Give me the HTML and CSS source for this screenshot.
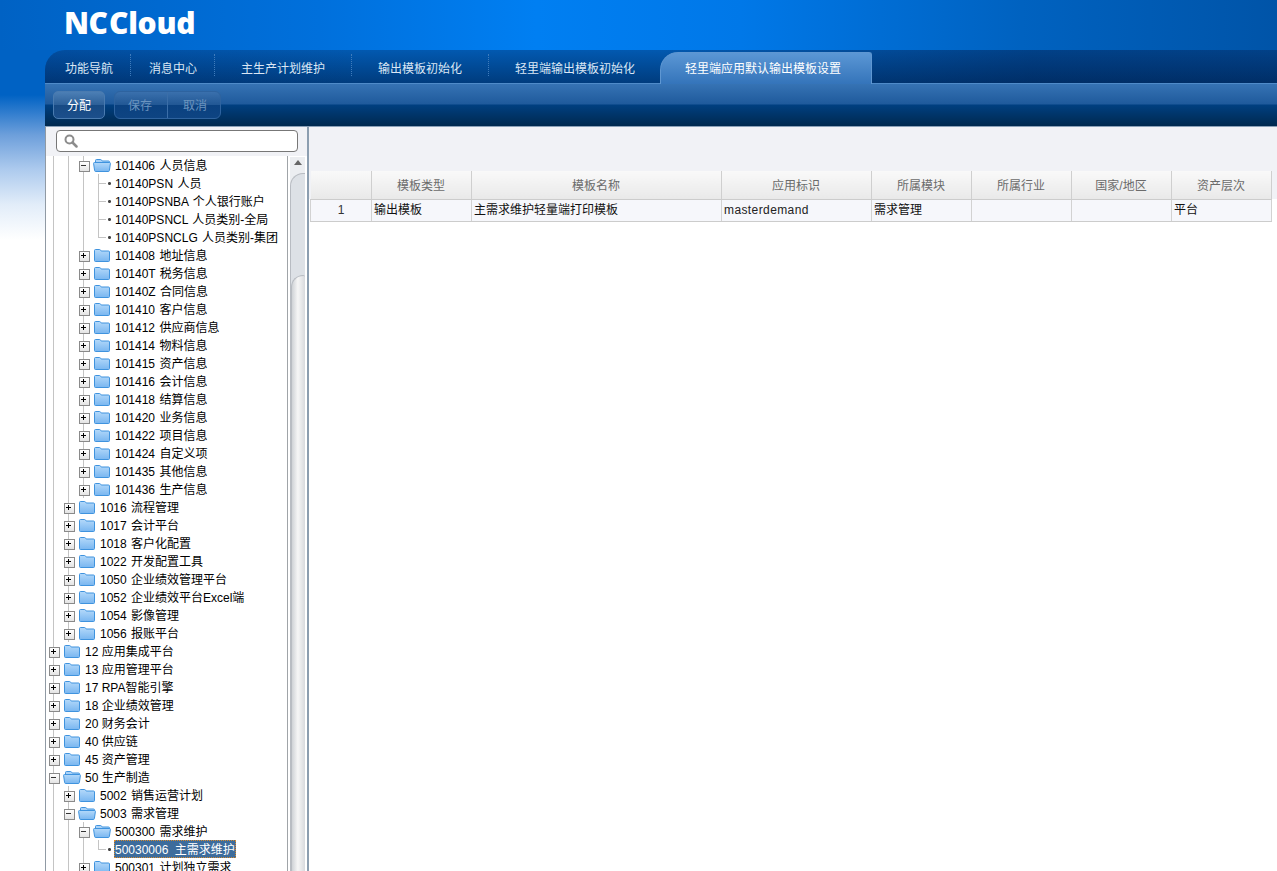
FILE: index.html
```html
<!DOCTYPE html>
<html lang="zh-CN">
<head>
<meta charset="utf-8">
<title>NC Cloud</title>
<link rel="stylesheet" href="styles.css">
</head>
<body>
<svg class="defs" width="0" height="0" aria-hidden="true">
  <defs>
    <linearGradient id="fb" x1="0" y1="0" x2="0" y2="1"><stop offset="0" stop-color="#b4d9fa"/><stop offset="1" stop-color="#79b6f0"/></linearGradient>
    <symbol id="fc" viewBox="0 0 16 13"><path d="M.5 3V1.500q0-1 1-1h4q.8 0 1.200.8l.5.7h7.300q1 0 1 1v8.500q0 1-1 1h-13q-1 0-1-1z" fill="url(#fb)" stroke="#3f93de"/></symbol>
    <symbol id="fo" viewBox="0 0 18 13"><path d="M2.500 4V1.500q0-1 1-1h4q.8 0 1.200.8l.5.7h6.300q1 0 1 1V4" fill="#a9d2f8" stroke="#3f93de"/><path d="M1.500 3.500h15q1 0 .9 1l-1 7q-.1 1-1.100 1H2.700q-1 0-1.100-1l-1-7q-.1-1 .9-1z" fill="url(#fb)" stroke="#3f93de"/></symbol>
  </defs>
</svg>
<header class="brand"><span class="logo"><span class="logo-nc">NC</span><span class="logo-cloud">Cloud</span></span></header>
<div class="shell">
  <nav class="tabs">
    <a class="tab t1">功能导航</a>
    <a class="tab t2">消息中心</a>
    <a class="tab t3">主生产计划维护</a>
    <a class="tab t3">输出模板初始化</a>
    <a class="tab t4">轻里端输出模板初始化</a>
    <a class="tab active">轻里端应用默认输出模板设置</a>
  </nav>
  <div class="toolbar">
    <button class="btn solo">分配</button>
    <div class="btn-group"><button class="btn off">保存</button><button class="btn off">取消</button></div>
  </div>
  <main class="content">
    <aside class="side">
      <div class="search">
        <div class="search-box">
          <svg class="search-icon" width="14" height="14" viewBox="0 0 14 14"><circle cx="5.500" cy="5.500" r="4" fill="none" stroke="#8c8c8c" stroke-width="2"/><path d="M8.500 8.500l4 4" stroke="#8c8c8c" stroke-width="2.500" stroke-linecap="round"/></svg>
        </div>
      </div>
      <div class="tree-wrap">
        <div class="tree">
          <div class="row"><i class="g"></i><i class="g"></i><i class="x m"></i><svg class="fo"><use href="#fo"/></svg><span class="lb">101406 人员信息</span></div>
          <div class="row"><i class="g"></i><i class="g"></i><i class="g"></i><i class="e"></i><i class="d"></i><span class="lb">10140PSN 人员</span></div>
          <div class="row"><i class="g"></i><i class="g"></i><i class="g"></i><i class="e"></i><i class="d"></i><span class="lb">10140PSNBA 个人银行账户</span></div>
          <div class="row"><i class="g"></i><i class="g"></i><i class="g"></i><i class="e"></i><i class="d"></i><span class="lb">10140PSNCL 人员类别-全局</span></div>
          <div class="row"><i class="g"></i><i class="g"></i><i class="g"></i><i class="e end"></i><i class="d"></i><span class="lb">10140PSNCLG 人员类别-集团</span></div>
          <div class="row"><i class="g"></i><i class="g"></i><i class="x"></i><svg class="fc"><use href="#fc"/></svg><span class="lb">101408 地址信息</span></div>
          <div class="row"><i class="g"></i><i class="g"></i><i class="x"></i><svg class="fc"><use href="#fc"/></svg><span class="lb">10140T 税务信息</span></div>
          <div class="row"><i class="g"></i><i class="g"></i><i class="x"></i><svg class="fc"><use href="#fc"/></svg><span class="lb">10140Z 合同信息</span></div>
          <div class="row"><i class="g"></i><i class="g"></i><i class="x"></i><svg class="fc"><use href="#fc"/></svg><span class="lb">101410 客户信息</span></div>
          <div class="row"><i class="g"></i><i class="g"></i><i class="x"></i><svg class="fc"><use href="#fc"/></svg><span class="lb">101412 供应商信息</span></div>
          <div class="row"><i class="g"></i><i class="g"></i><i class="x"></i><svg class="fc"><use href="#fc"/></svg><span class="lb">101414 物料信息</span></div>
          <div class="row"><i class="g"></i><i class="g"></i><i class="x"></i><svg class="fc"><use href="#fc"/></svg><span class="lb">101415 资产信息</span></div>
          <div class="row"><i class="g"></i><i class="g"></i><i class="x"></i><svg class="fc"><use href="#fc"/></svg><span class="lb">101416 会计信息</span></div>
          <div class="row"><i class="g"></i><i class="g"></i><i class="x"></i><svg class="fc"><use href="#fc"/></svg><span class="lb">101418 结算信息</span></div>
          <div class="row"><i class="g"></i><i class="g"></i><i class="x"></i><svg class="fc"><use href="#fc"/></svg><span class="lb">101420 业务信息</span></div>
          <div class="row"><i class="g"></i><i class="g"></i><i class="x"></i><svg class="fc"><use href="#fc"/></svg><span class="lb">101422 项目信息</span></div>
          <div class="row"><i class="g"></i><i class="g"></i><i class="x"></i><svg class="fc"><use href="#fc"/></svg><span class="lb">101424 自定义项</span></div>
          <div class="row"><i class="g"></i><i class="g"></i><i class="x"></i><svg class="fc"><use href="#fc"/></svg><span class="lb">101435 其他信息</span></div>
          <div class="row"><i class="g"></i><i class="g"></i><i class="x"></i><svg class="fc"><use href="#fc"/></svg><span class="lb">101436 生产信息</span></div>
          <div class="row"><i class="g"></i><i class="x"></i><svg class="fc"><use href="#fc"/></svg><span class="lb">1016 流程管理</span></div>
          <div class="row"><i class="g"></i><i class="x"></i><svg class="fc"><use href="#fc"/></svg><span class="lb">1017 会计平台</span></div>
          <div class="row"><i class="g"></i><i class="x"></i><svg class="fc"><use href="#fc"/></svg><span class="lb">1018 客户化配置</span></div>
          <div class="row"><i class="g"></i><i class="x"></i><svg class="fc"><use href="#fc"/></svg><span class="lb">1022 开发配置工具</span></div>
          <div class="row"><i class="g"></i><i class="x"></i><svg class="fc"><use href="#fc"/></svg><span class="lb">1050 企业绩效管理平台</span></div>
          <div class="row"><i class="g"></i><i class="x"></i><svg class="fc"><use href="#fc"/></svg><span class="lb">1052 企业绩效平台Excel端</span></div>
          <div class="row"><i class="g"></i><i class="x"></i><svg class="fc"><use href="#fc"/></svg><span class="lb">1054 影像管理</span></div>
          <div class="row"><i class="g"></i><i class="x"></i><svg class="fc"><use href="#fc"/></svg><span class="lb">1056 报账平台</span></div>
          <div class="row"><i class="x"></i><svg class="fc"><use href="#fc"/></svg><span class="lb">12 应用集成平台</span></div>
          <div class="row"><i class="x"></i><svg class="fc"><use href="#fc"/></svg><span class="lb">13 应用管理平台</span></div>
          <div class="row"><i class="x"></i><svg class="fc"><use href="#fc"/></svg><span class="lb">17 RPA智能引擎</span></div>
          <div class="row"><i class="x"></i><svg class="fc"><use href="#fc"/></svg><span class="lb">18 企业绩效管理</span></div>
          <div class="row"><i class="x"></i><svg class="fc"><use href="#fc"/></svg><span class="lb">20 财务会计</span></div>
          <div class="row"><i class="x"></i><svg class="fc"><use href="#fc"/></svg><span class="lb">40 供应链</span></div>
          <div class="row"><i class="x"></i><svg class="fc"><use href="#fc"/></svg><span class="lb">45 资产管理</span></div>
          <div class="row"><i class="x m"></i><svg class="fo"><use href="#fo"/></svg><span class="lb">50 生产制造</span></div>
          <div class="row"><i class="g"></i><i class="x"></i><svg class="fc"><use href="#fc"/></svg><span class="lb">5002 销售运营计划</span></div>
          <div class="row"><i class="g"></i><i class="x m"></i><svg class="fo"><use href="#fo"/></svg><span class="lb">5003 需求管理</span></div>
          <div class="row"><i class="g"></i><i class="g"></i><i class="x m"></i><svg class="fo"><use href="#fo"/></svg><span class="lb">500300 需求维护</span></div>
          <div class="row"><i class="g"></i><i class="g"></i><i class="g"></i><i class="e end"></i><i class="d"></i><span class="lb sel">50030006 主需求维护</span></div>
          <div class="row"><i class="g"></i><i class="g"></i><i class="x"></i><svg class="fc"><use href="#fc"/></svg><span class="lb">500301 计划独立需求</span></div>
        </div>
        <div class="scrollbar">
          <div class="sb-up"><i class="sb-arrow"></i></div>
          <div class="sb-track"><div class="sb-thumb"></div></div>
        </div>
      </div>
    </aside>
    <section class="panel">
      <div class="panel-top"></div>
      <div class="grid">
        <table class="tbl">
          <colgroup><col class="c0"><col class="c1"><col class="c2"><col class="c3"><col class="c1"><col class="c1"><col class="c1"><col class="c1"></colgroup>
          <thead>
            <tr><th></th><th>模板类型</th><th>模板名称</th><th>应用标识</th><th>所属模块</th><th>所属行业</th><th>国家/地区</th><th>资产层次</th></tr>
          </thead>
          <tbody>
            <tr><td class="num">1</td><td>输出模板</td><td>主需求维护轻量端打印模板</td><td class="latin">masterdemand</td><td>需求管理</td><td></td><td></td><td>平台</td></tr>
          </tbody>
        </table>
      </div>
    </section>
  </main>
</div>
</body>
</html>
```

FILE: styles.css
```css
* { box-sizing: border-box; }
html, body { margin: 0; height: 871px; overflow: hidden; }
body {
  font: 12px/18px "Liberation Sans", "Noto Sans CJK SC", sans-serif;
  color: #000;
  background: linear-gradient(#0062c4 0, #0062c4 95px, #6d9fdb 135px, #aecbee 170px, #e2edf9 205px, #fff 240px) no-repeat;
}
.defs { position: absolute; }

.brand {
  height: 50px;
  padding: 8px 0 0 64px;
  background: linear-gradient(90deg, #0062c4 0, #0070dc 25%, #007ff2 42%, #0078e8 58%, #0062c0 80%, #0054a8 100%);
}
.logo { display: flex; align-items: baseline; color: #fff; font: 800 30px/30px "Open Sans", sans-serif; }
.logo-nc { width: 45px; letter-spacing: -.6px; }
.logo-cloud { letter-spacing: -.3px; }

.shell { margin-left: 45px; height: 821px; display: flex; flex-direction: column; }

.tabs {
  height: 34px;
  display: flex;
  align-items: flex-end;
  border-top-left-radius: 20px;
  border-bottom: 1px solid #4f8bc9;
  background:
    linear-gradient(90deg, rgba(0,30,90,.2) 0, rgba(0,0,0,0) 25%, rgba(0,0,0,0) 50%, rgba(0,20,60,.35) 80%, rgba(0,20,60,.35) 100%),
    linear-gradient(#0259b0, #003c7e);
}
.tab { color: #dbe7f5; height: 32px; line-height: 36px; position: relative; white-space: nowrap; flex: none; }
.tab:not(.active):not(.t4)::after {
  content: ""; position: absolute; right: 0; top: 3px; height: 22px;
  border-right: 1px dotted #3f7cbc;
}
.t1 { padding: 0 17px 0 20px; width: 86px; }
.t2 { padding: 0 17px 0 18px; width: 84px; }
.t3 { padding: 0 26px 0 26px; width: 137px; }
.t4 { padding: 0 25px 0 26px; width: 171px; }
.tab.active {
  height: 32px; margin-bottom: -1px; width: 212px; padding: 0 32px 0 24px; color: #fff; line-height: 32px;
  background: linear-gradient(#5b97d5, #3474ba);
  border: 1px solid #5f97d2; border-bottom: 0;
  border-radius: 18px 3px 0 0;
}

.toolbar {
  height: 43px;
  padding: 7px 0 0 8px;
  display: flex;
  align-items: flex-start;
  gap: 9px;
  background: linear-gradient(#3673b4 0, #1f5a9c 20px, #003f80 21px, #00294f 100%);
  border-bottom: 1px solid #8aa0b8;
}
.btn {
  font: inherit; height: 28px; padding: 2px 0 0; border: 0; background: none; color: #fff; display: block;
}
.solo {
  width: 52px; border-radius: 5px; border: 1px solid #4a7bb0;
  background: linear-gradient(#4c7fb5, #2c5f98 50%, #174a84 50%, #1c4f8b);
}
.btn-group {
  width: 107px; height: 28px; display: flex; border-radius: 6px; border: 1px solid #2e639f;
  background: linear-gradient(#3a70ad, #215794 50%, #0a4180 50%, #0e4482);
}
.off { color: #6b94bf; width: 52px; height: 26px; padding: 2px 2px 0 0; }
.off + .off { border-left: 1px solid #3b6ea8; width: 53px; padding: 2px 0 0 2px; }

.content { flex: 1; min-height: 0; display: flex; background: #fff; border-left: 1px solid #909aa4; }
.side { width: 263px; flex: none; display: flex; flex-direction: column; border-right: 2px solid #8c9eb0; }
.search { height: 29px; padding: 3px 0 0 10px; background: #f1f2f6; }
.search-box {
  width: 242px; height: 22px; padding: 3px 0 0 7px; background: #fff;
  border: 1px solid #777; border-radius: 4px;
}
.search-icon { display: block; }
.tree-wrap { flex: 1; min-height: 0; display: flex; overflow: hidden; }
.tree { width: 242px; flex: none; border-right: 1px solid #a0a4a8; }

.row { height: 18px; display: flex; align-items: flex-start; white-space: nowrap; }
.g, .e, .x { width: 15px; height: 18px; flex: none; display: block; position: relative; }
.g, .x { background: linear-gradient(#c4c4c4, #c4c4c4) 7px 0 / 1px 18px no-repeat; }
.e {
  background:
    linear-gradient(#c4c4c4, #c4c4c4) 7px 0 / 1px 18px no-repeat,
    linear-gradient(#c4c4c4, #c4c4c4) 7px 9px / 8px 1px no-repeat;
}
.e.end {
  background:
    linear-gradient(#c4c4c4, #c4c4c4) 7px 0 / 1px 10px no-repeat,
    linear-gradient(#c4c4c4, #c4c4c4) 7px 9px / 8px 1px no-repeat;
}
.x::before {
  content: ""; position: absolute; left: 3px; top: 5px; width: 9px; height: 9px;
  background: linear-gradient(#fff, #e4e4e4); border: 1px solid #8a8a8a;
}
.x::after {
  content: ""; position: absolute; left: 5px; top: 7px; width: 5px; height: 5px;
  background:
    linear-gradient(#000, #000) 0 2px / 5px 1px no-repeat,
    linear-gradient(#000, #000) 2px 0 / 1px 5px no-repeat;
}
.x.m::after { background: linear-gradient(#333, #333) 0 2px / 5px 1px no-repeat; }
.d { width: 9px; height: 18px; flex: none; display: block; background: radial-gradient(circle at center, #444 1px, #999 1.500px, transparent 2px) 2px 8px / 3px 3px no-repeat; }
.fc { width: 16px; height: 13px; flex: none; margin: 3px 5px 0 3px; }
.fo { width: 18px; height: 13px; flex: none; margin: 3px 4px 0 2px; }
.lb { display: block; height: 18px; line-height: 20px; word-spacing: 1px; }
.row > .x:first-child ~ .lb { word-spacing: 0; }
.sel {
  margin: 0 0 0 -1px; padding: 0 1px; color: #fff; word-spacing: 3px;
  background: #3d6c9c; outline: 1px dotted #d88a2c; outline-offset: -1px;
}

.scrollbar {
  width: 15px; flex: none; margin: 1px 0 0 2px; display: flex; flex-direction: column;
  background: #eceef1;
}
.sb-up { height: 16px; flex: none; display: flex; justify-content: center; padding-top: 3px; }
.sb-arrow { display: block; width: 0; height: 0; border: 4px solid transparent; border-top: 0; border-bottom: 5px solid #666; }
.sb-track {
  flex: 1; min-height: 0; display: flex; flex-direction: column;
  border-radius: 13px 0 0 0;
  border-top: 1px solid #b8bcc2;
  border-left: 1px solid #b8bcc2;
  background: #dde1e6;
}
.sb-thumb {
  flex: 1; margin: 101px 0 0 0;
  border-radius: 13px 2px 0 0;
  border-top: 1px solid #b8bcc2;
  border-left: 1px solid #b8bcc2;
  background: linear-gradient(90deg, #cfd2d6 0, #f6f6f6 45%, #d8dade 100%);
}

.panel { flex: 1; min-width: 0; display: flex; flex-direction: column; }
.panel-top { height: 44px; background: #f1f2f6; }
.grid {
  padding-left: 1px;
  background: linear-gradient(#f1f2f6, #f1f2f6) 0 0 / 100% 28px no-repeat;
}
.tbl { table-layout: fixed; width: 962px; border-collapse: collapse; }
.c0 { width: 61px; }
.c1 { width: 100px; }
.c2 { width: 250px; }
.c3 { width: 150px; }
.tbl th {
  height: 28px; padding: 2px 1px 0 0; font-weight: 400; color: #6b6b6b; text-align: center;
  background: linear-gradient(#f9f9f9, #e9e9e9);
  border-right: 1px solid #cfcfcf;
  border-bottom: 1px solid #cccccc;
}
.tbl td {
  height: 22px; padding: 0 0 0 2px; background: #f6f7fb; color: #111;
  border-right: 1px solid #d2d2d2;
  border-bottom: 1px solid #cccccc;
}
.tbl td.num { text-align: center; padding: 0; color: #333; }
.tbl td:first-child { border-left: 1px solid #d2d2d2; }
.tbl td.latin { letter-spacing: .4px; color: #222; }
```
